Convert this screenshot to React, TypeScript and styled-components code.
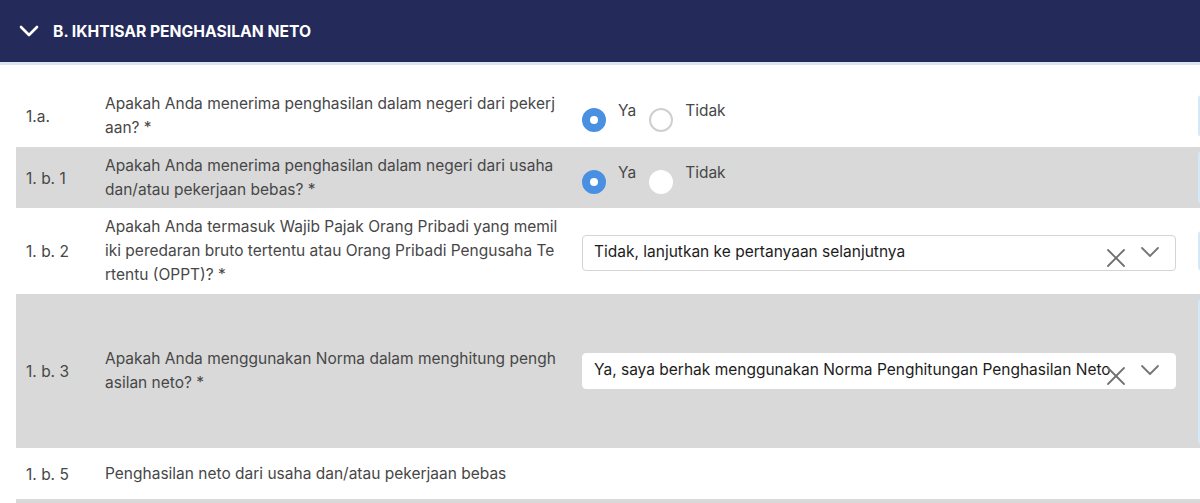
import * as React from 'react';
import styled, {createGlobalStyle} from 'styled-components';

const GlobalStyle = createGlobalStyle`
  html, body {
    margin: 0;
    padding: 0;
    background: #ffffff;
    overflow: hidden;
    font-family: Inter, "Noto Sans", "Liberation Sans", sans-serif;
  }
`;

type Question = {
    no: string;
    text: string;
    height: number;
    shaded?: boolean;
    answer?: React.ReactNode;
    side?: {top: number; height: number};
};

const ChevronIcon = ({color, width}: {color: string; width: number}) => (
    <svg width="20" height="12" viewBox="0 0 20 12" fill="none">
        <polyline points="2,2 10,10 18,2" stroke={color} strokeWidth={width} strokeLinecap="round" strokeLinejoin="round"/>
    </svg>
);

const ClearIcon = () => (
    <svg width="20" height="20" viewBox="0 0 20 20" fill="none">
        <line x1="2" y1="2" x2="18" y2="18" stroke="#707070" strokeWidth="1.8" strokeLinecap="round"/>
        <line x1="18" y1="2" x2="2" y2="18" stroke="#707070" strokeWidth="1.8" strokeLinecap="round"/>
    </svg>
);

const RadioGroup = ({shaded}: {shaded?: boolean}) => (
    <Radios>
        <RadioOption>
            <RadioDot $checked/>
            <RadioLabel>Ya</RadioLabel>
        </RadioOption>
        <RadioOption>
            <RadioDot $plain={shaded}/>
            <RadioLabel>Tidak</RadioLabel>
        </RadioOption>
    </Radios>
);

const SelectBox = ({value, bordered}: {value: string; bordered?: boolean}) => (
    <Select $bordered={bordered}>
        <SelectValue>{value}</SelectValue>
        <SelectIcons>
            <ClearSlot><ClearIcon/></ClearSlot>
            <ChevronSlot><ChevronIcon color="#757575" width={1.8}/></ChevronSlot>
        </SelectIcons>
    </Select>
);

const questions: Question[] = [
    {
        no: '1.a.',
        text: 'Apakah Anda menerima penghasilan dalam negeri dari pekerjaan? *',
        height: 62,
        answer: <RadioGroup/>,
        side: {top: 10, height: 42},
    },
    {
        no: '1. b. 1',
        text: 'Apakah Anda menerima penghasilan dalam negeri dari usaha dan/atau pekerjaan bebas? *',
        height: 61,
        shaded: true,
        answer: <RadioGroup shaded/>,
        side: {top: 4, height: 53},
    },
    {
        no: '1. b. 2',
        text: 'Apakah Anda termasuk Wajib Pajak Orang Pribadi yang memiliki peredaran bruto tertentu atau Orang Pribadi Pengusaha Tertentu (OPPT)? *',
        height: 86,
        answer: <SelectBox value="Tidak, lanjutkan ke pertanyaan selanjutnya" bordered/>,
        side: {top: 23, height: 40},
    },
    {
        no: '1. b. 3',
        text: 'Apakah Anda menggunakan Norma dalam menghitung penghasilan neto? *',
        height: 154,
        shaded: true,
        answer: <SelectBox value="Ya, saya berhak menggunakan Norma Penghitungan Penghasilan Neto"/>,
        side: {top: 5, height: 146},
    },
    {
        no: '1. b. 5',
        text: 'Penghasilan neto dari usaha dan/atau pekerjaan bebas',
        height: 51,
    },
    {
        no: '',
        text: '',
        height: 20,
        shaded: true,
    },
];

export default function App() {
    return (
        <Page>
            <GlobalStyle/>
            <Header>
                <ChevronIcon color="#ffffff" width={2.6}/>
                <Title>B. IKHTISAR PENGHASILAN NETO</Title>
            </Header>
            <Body>
                {questions.map((q, i) => (
                    <Row key={i} $height={q.height} $shaded={q.shaded}>
                        <Number>{q.no}</Number>
                        <QuestionText>{q.text}</QuestionText>
                        <Answer>{q.answer}</Answer>
                        <Side>
                            {q.side && <SideBox style={{marginTop: q.side.top, height: q.side.height}}/>}
                        </Side>
                    </Row>
                ))}
            </Body>
        </Page>
    );
}

const Page = styled.div`
  width: 100%;
  height: 503px;
  overflow: hidden;
`;

const Header = styled.div`
  height: 62px;
  background: #242b5a;
  border-bottom: 3px solid #dce4ef;
  display: flex;
  align-items: center;
  gap: 14px;
  padding-left: 19px;
`;

const Title = styled.div`
  color: #ffffff;
  font-weight: 700;
  font-size: 15.7px;
`;

const Body = styled.div`
  padding: 20px 0 0 16px;
`;

const Row = styled.div<{ $height: number; $shaded?: boolean }>`
  display: grid;
  grid-template-columns: 79px 477px 594px 200px;
  width: 1360px;
  align-items: center;
  min-height: ${p => p.$height}px;
  padding-left: 10px;
  background: ${p => (p.$shaded ? '#d9d9d9' : '#ffffff')};
  color: #474747;
  font-size: 15.5px;
  line-height: 24px;
`;

const Number = styled.div`
  padding-top: 2px;
`;

const QuestionText = styled.div`
  padding-right: 22.5px;
  word-break: break-all;
`;

const Answer = styled.div`
  display: flex;
  align-items: center;
`;

const Side = styled.div`
  align-self: stretch;
  padding-left: 22px;
`;

const SideBox = styled.div`
  width: 60px;
  background: #d3e8f8;
  border-radius: 4px;
`;

const Radios = styled.div`
  display: flex;
  align-items: flex-start;
  gap: 13px;
  margin-top: 6px;
`;

const RadioOption = styled.label`
  display: flex;
  align-items: flex-start;
  gap: 12px;
`;

const RadioDot = styled.span<{ $checked?: boolean; $plain?: boolean }>`
  width: 24px;
  height: 24px;
  border-radius: 50%;
  box-sizing: border-box;
  margin-top: 2px;
  background: #ffffff;
  border: ${p => (p.$checked ? '8px solid #4a90e2' : p.$plain ? '2px solid #ffffff' : '2px solid #cfcfcf')};
`;

const RadioLabel = styled.span`
  margin-top: -7px;
  color: #474747;
`;

const Select = styled.div<{ $bordered?: boolean }>`
  position: relative;
  width: 594px;
  height: 36px;
  box-sizing: border-box;
  background: #ffffff;
  border: 1px solid ${p => (p.$bordered ? '#d4d4d4' : '#ffffff')};
  border-radius: 4px;
  display: flex;
  align-items: center;
  padding-left: 11px;
  margin-top: ${p => (p.$bordered ? '4px' : '0')};
`;

const SelectValue = styled.div`
  color: #1c1c1c;
  font-size: 15.5px;
  white-space: nowrap;
  margin-top: -2px;
`;

const SelectIcons = styled.div`
  position: absolute;
  right: 15px;
  top: 0;
  bottom: 0;
  display: flex;
  align-items: center;
  gap: 14px;
`;

const ClearSlot = styled.span`
  display: flex;
  margin-top: 9px;
`;

const ChevronSlot = styled.span`
  display: flex;
  margin-top: -2px;
`;
